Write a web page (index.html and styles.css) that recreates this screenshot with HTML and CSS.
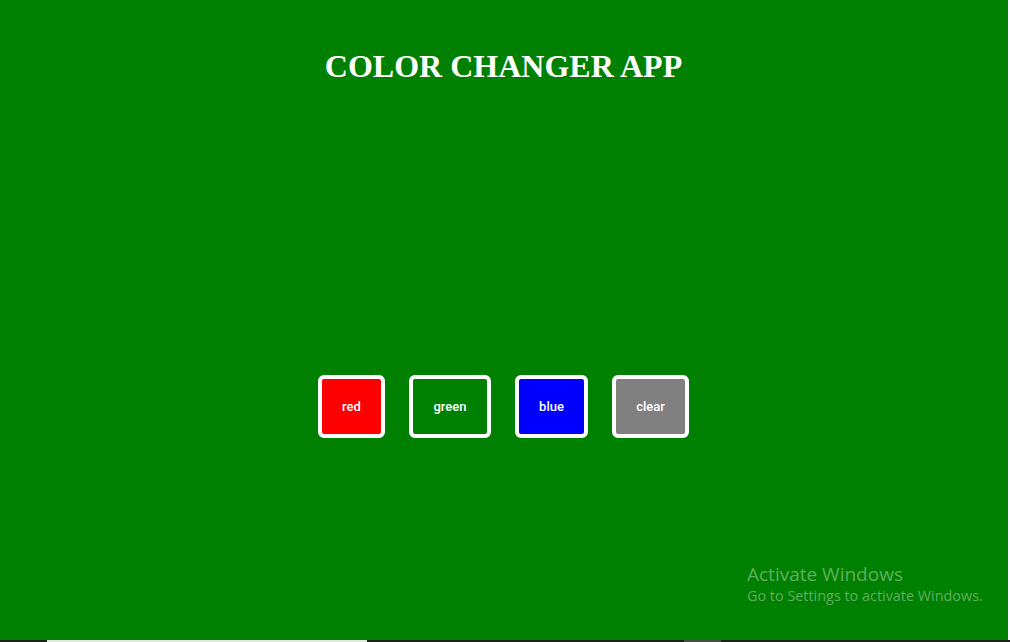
FILE: index.html
```html
<!DOCTYPE html>
<html>
<head>
<meta charset="utf-8">
<link rel="stylesheet" href="styles.css">
</head>
<body>
<div class="screen">
  <main class="app">
    <h1 class="title">COLOR CHANGER APP</h1>
    <div class="buttons">
      <button class="btn btn-red">red</button>
      <button class="btn btn-green">green</button>
      <button class="btn btn-blue">blue</button>
      <button class="btn btn-clear">clear</button>
    </div>
    <div class="watermark">
      <div class="wm-title">Activate Windows</div>
      <div class="wm-sub">Go to Settings to activate Windows.</div>
    </div>
  </main>
  <div class="edge"></div>
</div>
<div class="taskbar">
  <div class="tb-light"></div>
  <div class="tb-grey"></div>
</div>
</body>
</html>
```
FILE: styles.css
```css
html, body {
  margin: 0;
  padding: 0;
  width: 1010px;
  height: 642px;
  overflow: hidden;
  background: #ffffff;
}
.screen {
  display: flex;
  height: 640px;
}
.app {
  position: relative;
  width: 1008px;
  height: 640px;
  background: #008000;
  display: flex;
  flex-direction: column;
  align-items: center;
}
.edge {
  width: 2px;
  background: #ffffff;
}
.title {
  margin: 48px 1px 0 0;
  font-family: "Liberation Serif", "Times New Roman", serif;
  font-weight: bold;
  font-size: 32px;
  line-height: 37px;
  color: #ffffff;
}
.buttons {
  margin: 290px 1px 0 0;
  display: flex;
  gap: 24px;
}
.btn {
  box-sizing: border-box;
  height: 63px;
  padding: 0 18px;
  border: 4px solid #ffffff;
  border-radius: 6px;
  font-family: Roboto, "Liberation Sans", Arial, sans-serif;
  font-weight: 500;
  font-size: 13px;
  color: #ffffff;
  cursor: pointer;
}
.btn-red { background: #ff0000; width: 67px; }
.btn-green { background: #008000; width: 82px; }
.btn-blue { background: #0000ff; width: 73px; }
.btn-clear { background: #808080; width: 77px; }
.watermark {
  position: absolute;
  left: 747px;
  top: 562px;
  font-family: "Open Sans", "Noto Sans", sans-serif;
  color: rgba(255, 255, 255, 0.38);
}
.wm-title {
  font-size: 19px;
  line-height: 24px;
}
.wm-sub {
  font-size: 14.4px;
  line-height: 20px;
  margin-top: 0;
}
.taskbar {
  height: 2px;
  background: #1e1e1e;
  display: flex;
}
.tb-light {
  margin-left: 47px;
  width: 320px;
  background: #e6e6e6;
}
.tb-grey {
  margin-left: 317px;
  width: 37px;
  background: #4a4a4a;
}
```
